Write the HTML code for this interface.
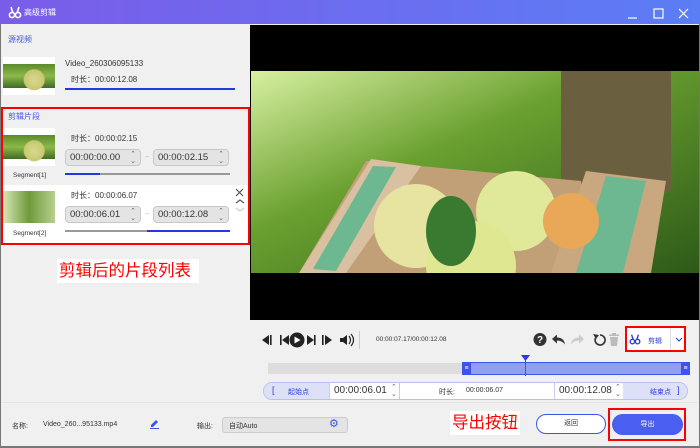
<!DOCTYPE html>
<html><head><meta charset="utf-8"><style>
*{margin:0;padding:0;box-sizing:border-box}
body{width:700px;height:448px;overflow:hidden;background:#f0f0f0;font-family:"Liberation Sans","Noto Sans CJK SC",sans-serif;font-size:8px;color:#333;position:relative}
.a{position:absolute}
.title{left:0;top:0;width:700px;height:24px;background:linear-gradient(90deg,#7b5ce9,#5b7df5)}
.thumb{background:radial-gradient(circle at 60% 60%,#d8d890 0,#c8c870 10px,transparent 11px),linear-gradient(180deg,#fff 0,#fff 18%,#5a8a2a 18%,#8cb84a 50%,#3f6a22 82%,#fff 82%)}
.tb{background:#e4e4e4;border:1px solid #c8c8c8;border-radius:4px;height:17px;font-size:9.5px;color:#333;padding:2px 4px;line-height:12px}
.tb i{position:absolute;right:4px;top:1px;font-style:normal;font-size:7px;color:#666;line-height:7px}
.bar{height:2px;background:#999}
.blue{color:#4857e8}
</style></head><body>
<div class="a title"></div>
<svg class="a" style="left:8px;top:5px" width="14" height="14" viewBox="0 0 14 14" fill="none" stroke="#fff" stroke-width="1.6"><circle cx="4" cy="10" r="2.6"/><circle cx="10" cy="10" r="2.6"/><path d="M3 2l2 6M11 2l-2 6"/></svg>
<div class="a" style="left:24px;top:7px;color:#fff;font-size:8px">高级剪辑</div>
<svg class="a" style="left:625px;top:6px" width="70" height="14" viewBox="0 0 70 14" stroke="#fff" stroke-width="1.2" fill="none"><path d="M3 12h9"/><rect x="29" y="3" width="9" height="9"/><path d="M54 3l9 9M63 3l-9 9"/></svg>

<div class="a blue" style="left:8px;top:34px">源视频</div>
<div class="a thumb" style="left:3px;top:57px;width:52px;height:38px"></div>
<div class="a" style="left:65px;top:59px;font-size:8px">Video_260306095133</div>
<div class="a" style="left:71px;top:74px;font-size:8px">时长：00:00:12.08</div>
<div class="a" style="left:65px;top:88px;width:170px;height:2px;background:#2438e0"></div>

<div class="a" style="left:0;top:185px;width:250px;height:60px;background:#fff"></div>
<div class="a" style="left:1px;top:107px;width:249px;height:138px;border:2px solid #f00"></div>
<div class="a blue" style="left:8px;top:111px">剪辑片段</div>
<div class="a thumb" style="left:3px;top:128px;width:52px;height:38px"></div>
<div class="a" style="left:13px;top:172px;font-size:6.5px">Segment[1]</div>
<div class="a" style="left:71px;top:133px">时长：00:00:02.15</div>
<div class="a tb" style="left:65px;top:149px;width:76px">00:00:00.00<i>⌃<br>⌄</i></div>
<div class="a" style="left:145px;top:152px;color:#bbb">–</div>
<div class="a tb" style="left:153px;top:149px;width:76px">00:00:02.15<i>⌃<br>⌄</i></div>
<div class="a bar" style="left:65px;top:173px;width:165px"></div>
<div class="a" style="left:65px;top:173px;width:35px;height:2px;background:#2438e0"></div>

<div class="a" style="left:3px;top:191px;width:52px;height:32px;background:linear-gradient(90deg,#d8e8b8,#6e9a3a 50%,#b8d090)"></div>
<div class="a" style="left:13px;top:230px;font-size:6.5px">Segment[2]</div>
<div class="a" style="left:71px;top:190px">时长：00:00:06.07</div>
<div class="a tb" style="left:65px;top:206px;width:76px">00:00:06.01<i>⌃<br>⌄</i></div>
<div class="a" style="left:145px;top:209px;color:#bbb">–</div>
<div class="a tb" style="left:153px;top:206px;width:76px">00:00:12.08<i>⌃<br>⌄</i></div>
<div class="a bar" style="left:65px;top:230px;width:165px"></div>
<div class="a" style="left:147px;top:230px;width:83px;height:2px;background:#2438e0"></div>
<svg class="a" style="left:234px;top:187px" width="12" height="28" viewBox="0 0 12 28" fill="none" stroke-width="1.2"><path d="M2 2l7 7M9 2l-7 7" stroke="#555"/><path d="M2 16l4-3 4 3" stroke="#555"/><path d="M2 21l4 3 4-3" stroke="#ccc"/></svg>

<div class="a" style="left:57px;top:259px;background:#fff;color:#f00;font-size:16.5px;padding:0 8px 0 2px;line-height:24px">剪辑后的片段列表</div>

<div class="a" style="left:250px;top:25px;width:450px;height:295px;background:#000"></div>
<svg class="a" style="left:251px;top:71px" width="448" height="202" viewBox="0 0 448 202">
<defs><linearGradient id="g" x1="0" y1="0" x2="1" y2="1"><stop offset="0" stop-color="#d8f0a0"/><stop offset=".4" stop-color="#6aa030"/><stop offset="1" stop-color="#2d5a18"/></linearGradient></defs>
<rect width="448" height="202" fill="url(#g)"/>
<rect x="310" y="0" width="110" height="120" fill="#6a6040"/>
<polygon points="48,202 115,90 330,110 340,202" fill="#c2a077"/>
<polygon points="48,202 120,88 170,95 95,202" fill="#d8c0a0"/>
<polygon points="62,198 122,95 145,96 85,200" fill="#6db890"/>
<polygon points="300,202 335,100 415,110 400,202" fill="#c9a880"/>
<polygon points="325,202 355,105 395,110 372,202" fill="#6db890"/>
<circle cx="165" cy="155" r="42" fill="#e6e4a0"/>
<circle cx="265" cy="140" r="40" fill="#e0e89a"/>
<circle cx="320" cy="150" r="28" fill="#e8a858"/>
<circle cx="220" cy="195" r="45" fill="#dfe890"/>
<ellipse cx="200" cy="160" rx="25" ry="35" fill="#3a7a30"/>
</svg>

<svg class="a" style="left:258px;top:330px" width="100" height="20" viewBox="0 0 100 20" fill="#222">
<path d="M4 10l7-5v10z"/><rect x="12" y="5" width="1.6" height="10"/>
<rect x="22" y="5" width="1.6" height="10"/><path d="M24 10l7-5v10z"/>
<circle cx="39" cy="10" r="7.5"/><path d="M36.5 6.5l6 3.5-6 3.5z" fill="#fff"/>
<path d="M49 5l7 5-7 5z"/><rect x="56" y="5" width="1.6" height="10"/>
<rect x="64" y="5" width="1.6" height="10"/><path d="M67 5l7 5-7 5z"/>
<path d="M82 8h3l4-3v10l-4-3h-3z"/><path d="M91 6q3 4 0 8M93 4q5 6 0 12" stroke="#222" stroke-width="1.2" fill="none"/>
</svg>
<div class="a" style="left:359px;top:331px;width:1px;height:18px;background:#ccc"></div>
<div class="a" style="left:376px;top:336px;font-size:6.5px;color:#333">00:00:07.17/00:00:12.08</div>
<svg class="a" style="left:532px;top:331px" width="90" height="17" viewBox="0 0 90 17">
<circle cx="8" cy="8.5" r="6.5" fill="#333"/><text x="8" y="12" font-size="10" font-weight="bold" fill="#fff" text-anchor="middle" font-family="Liberation Sans">?</text>
<path d="M20 8l5-4.5v3q7 0 8 7q-3-4-8-4v3z" fill="#333"/>
<path d="M52 8l-5-4.5v3q-7 0-8 7q3-4 8-4v3z" fill="#ccc"/>
<path d="M68 4a5 5 0 1 1-4.5 3" stroke="#333" stroke-width="1.6" fill="none"/><path d="M61 3l3 5 3-4z" fill="#333"/>
<rect x="77" y="3.5" width="10" height="1.5" fill="#bbb"/><rect x="80" y="2" width="4" height="2" fill="#bbb"/><path d="M78 6h8l-1 9h-6z" fill="#bbb"/>
</svg>
<div class="a" style="left:625px;top:326px;width:61px;height:26px;border:2px solid #f00;background:#fff"></div>
<svg class="a" style="left:629px;top:333px" width="12" height="12" viewBox="0 0 14 14" fill="none" stroke="#2a3be0" stroke-width="1.6"><circle cx="4" cy="10" r="2.6"/><circle cx="10" cy="10" r="2.6"/><path d="M3 2l2 6M11 2l-2 6"/></svg>
<div class="a" style="left:648px;top:336px;font-size:7px;color:#2a3be0">剪辑</div>
<div class="a" style="left:670px;top:328px;width:1px;height:22px;background:#ddd"></div>
<svg class="a" style="left:675px;top:337px" width="8" height="6" viewBox="0 0 8 6"><path d="M1 1l3 3 3-3" stroke="#2a3be0" fill="none"/></svg>

<div class="a" style="left:268px;top:363px;width:195px;height:11px;background:#ddd"></div>
<div class="a" style="left:462px;top:362px;width:228px;height:13px;background:#8fa0f0;border:1px solid #3d52ee;border-radius:2px"></div>
<div class="a" style="left:462px;top:362px;width:9px;height:13px;background:#3d52ee;color:#fff;font-size:7px;text-align:center;line-height:13px">≡</div>
<div class="a" style="left:681px;top:362px;width:9px;height:13px;background:#3d52ee;color:#fff;font-size:7px;text-align:center;line-height:13px">≡</div>
<div class="a" style="left:525px;top:358px;width:1px;height:18px;background:#3d52ee"></div>
<svg class="a" style="left:521px;top:355px" width="9" height="6" viewBox="0 0 9 6"><path d="M0 0h9l-4.5 6z" fill="#2a3be0"/></svg>

<div class="a" style="left:263px;top:382px;width:425px;height:18px;border:1px solid #b8c0f0;border-radius:9px;background:#fff;overflow:hidden">
<div class="a" style="left:0;top:0;width:65px;height:18px;background:#dde1f8"></div>
<div class="a" style="left:359px;top:0;width:66px;height:18px;background:#dde1f8"></div>
<div class="a" style="left:8px;top:2px;color:#2a3be0;font-size:9px">[</div>
<div class="a" style="left:24px;top:4px;color:#2a3be0;font-size:7px">起始点</div>
<div class="a" style="left:65px;top:0;width:1px;height:18px;background:#c8cdf0"></div>
<div class="a" style="left:70px;top:2px;font-size:10px;color:#333">00:00:06.01</div>
<div class="a" style="left:127px;top:1px;font-size:7px;color:#666;line-height:7px">⌃<br>⌄</div>
<div class="a" style="left:135px;top:0;width:1px;height:18px;background:#c8cdf0"></div>
<div class="a" style="left:175px;top:4px;font-size:7px">时长:</div>
<div class="a" style="left:202px;top:4px;font-size:7px">00:00:06.07</div>
<div class="a" style="left:290px;top:0;width:1px;height:18px;background:#c8cdf0"></div>
<div class="a" style="left:295px;top:2px;font-size:10px;color:#333">00:00:12.08</div>
<div class="a" style="left:351px;top:1px;font-size:7px;color:#666;line-height:7px">⌃<br>⌄</div>
<div class="a" style="left:386px;top:4px;color:#2a3be0;font-size:7px">结束点</div>
<div class="a" style="left:413px;top:2px;color:#2a3be0;font-size:9px">]</div>
</div>

<div class="a" style="left:0;top:402px;width:700px;height:1px;background:#e4e4e4"></div>
<div class="a" style="left:12px;top:421px;font-size:7px">名称:</div>
<div class="a" style="left:43px;top:421px;font-size:7px">Video_260...95133.mp4</div>
<svg class="a" style="left:149px;top:418px" width="11" height="11" viewBox="0 0 11 11"><path d="M2 7l5-5 2 2-5 5H2z" fill="#3d52ee"/><rect x="1" y="10" width="9" height="1" fill="#3d52ee"/></svg>
<div class="a" style="left:197px;top:421px;font-size:7px">输出:</div>
<div class="a" style="left:222px;top:417px;width:126px;height:16px;background:#e4e4e4;border:1px solid #ccc;border-radius:3px"></div>
<div class="a" style="left:229px;top:421px;font-size:7px">自动Auto</div>
<div class="a" style="left:329px;top:417px;color:#3d52ee;font-size:11px">⚙</div>

<div class="a" style="left:450px;top:411px;background:#fff;color:#f00;font-size:16.5px;line-height:24px;padding:0 2px">导出按钮</div>
<div class="a" style="left:536px;top:414px;width:70px;height:20px;border:1.5px solid #3d52ee;border-radius:10px;background:#fff;font-size:7px;text-align:center;line-height:17px">返回</div>
<div class="a" style="left:608px;top:408px;width:78px;height:33px;border:2px solid #f00"></div>
<div class="a" style="left:612px;top:414px;width:71px;height:21px;border-radius:11px;background:#4a5ef0;color:#fff;font-size:7px;text-align:center;line-height:21px">导出</div>
<div class="a" style="left:0;top:446px;width:700px;height:2px;background:#777"></div>
<div class="a" style="left:0;top:24px;width:1px;height:424px;background:#777"></div>
<div class="a" style="left:699px;top:24px;width:1px;height:424px;background:#777"></div>
</body></html>
